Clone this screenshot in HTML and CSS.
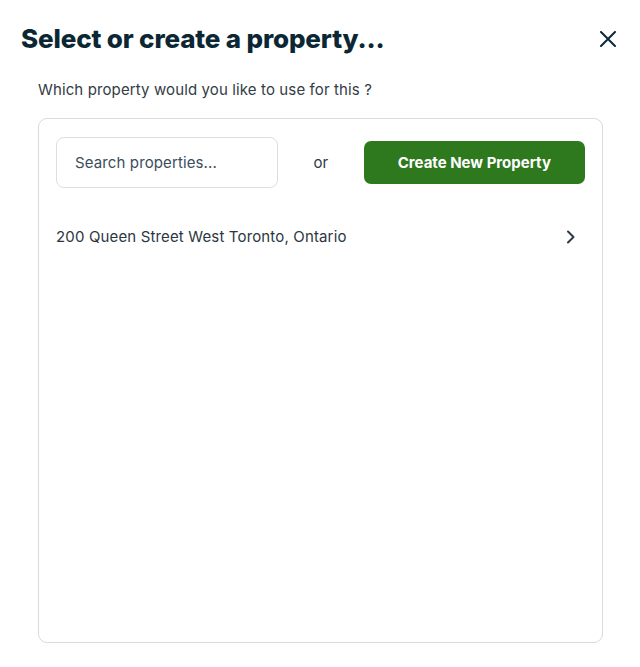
FILE: index.html
```html
<!DOCTYPE html>
<html>
<head>
<meta charset="utf-8">
<link rel="stylesheet" href="styles.css">
</head>
<body>
<div class="modal">
  <div class="header">
    <h1 class="title">Select or create a property...</h1>
    <button class="close" aria-label="Close">
      <svg width="16" height="16" viewBox="0 0 16 16"><path d="M1 1L15 15M15 1L1 15" stroke="#0b2a38" stroke-width="2" stroke-linecap="round" fill="none"/></svg>
    </button>
  </div>
  <p class="subtitle">Which property would you like to use for this ?</p>
  <div class="card">
    <div class="toolbar">
      <input class="search" type="text" placeholder="Search properties...">
      <span class="or">or</span>
      <button class="create">Create New Property</button>
    </div>
    <div class="row">
      <span class="address">200 Queen Street West Toronto, Ontario</span>
      <svg class="chev" width="10" height="14" viewBox="0 0 10 14"><path d="M2 1.5L7.5 7L2 12.5" stroke="#2f3a44" stroke-width="2" stroke-linecap="round" stroke-linejoin="round" fill="none"/></svg>
    </div>
  </div>
</div>
</body>
</html>
```
FILE: styles.css
```css
* { box-sizing: border-box; }
html, body { margin: 0; padding: 0; background: #fff; }
body { font-family: Inter, "Noto Sans", sans-serif; color: #2c3640; }
.modal { width: 640px; height: 667px; padding: 20px 21px 0 21px; }
.header { display: flex; justify-content: space-between; align-items: center; height: 38px; }
.title { margin: 0; font-size: 26px; font-weight: 800; color: #0b2733; letter-spacing: -0.15px; line-height: 38px; }
.close { background: none; border: none; padding: 0; margin-right: 3px; width: 16px; height: 16px; display: flex; cursor: pointer; }
.subtitle { margin: 22px 0 0 17px; font-size: 15px; line-height: 20px; color: #333c44; letter-spacing: 0.12px; }
.card { margin: 18px 16px 0 17px; height: 525px; border: 1px solid #d8dcdc; border-radius: 9px; padding: 18px 17px 0 17px; }
.toolbar { display: flex; align-items: center; }
.search { width: 222px; height: 51px; border: 1px solid #dcdfe0; border-radius: 8px; padding: 0 18px; font-family: inherit; font-size: 15px; color: #33485a; outline: none; letter-spacing: 0.12px; }
.search::placeholder { color: #3a4e5c; }
.or { width: 86px; text-align: center; font-size: 15px; color: #2f3a44; }
.create { width: 222px; height: 43px; background: #2e781e; border: none; border-radius: 7px; color: #fff; font-family: inherit; font-weight: 700; font-size: 15px; cursor: pointer; }
.row { display: flex; justify-content: space-between; align-items: center; margin-top: 39px; padding-right: 9px; }
.address { font-size: 15px; color: #2c3640; letter-spacing: 0.15px; }
```
